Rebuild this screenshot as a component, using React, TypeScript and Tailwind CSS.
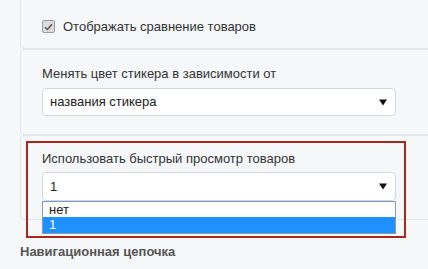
import React from "react";

function Arrow() {
  return (
    <svg width="8" height="7" viewBox="0 0 8 7" className="shrink-0">
      <path d="M0 0.5 H8 L4 6.5 Z" fill="#111" />
    </svg>
  );
}

function SelectBox({ value, tall }: { value: string; tall?: boolean }) {
  return (
    <div
      className={`flex items-center justify-between w-[354px] ${
        tall ? "h-[29px]" : "h-[28px]"
      } bg-white border border-[#cfd8df] rounded-[4px] pl-[7px] pr-[8px]`}
    >
      <span className="text-[13px] text-[#222]">{value}</span>
      <Arrow />
    </div>
  );
}

export default function App() {
  return (
    <div
      className="relative w-[428px] h-[269px] overflow-hidden bg-[#f5f7f9] text-[#333]"
      style={{ fontFamily: '"Liberation Sans", Arial, sans-serif' }}
    >
      <div className="pl-[20px] w-[460px]">
        {/* отображать сравнение */}
        <div className="-mt-[8px] h-[57px] border border-[#e1e7eb] rounded-[4px] flex items-start pl-[21px] pt-[27px]">
          <span className="w-[13px] h-[13px] rounded-[2px] border border-[#9a9a9a] bg-[#dcdcdc] flex items-center justify-center">
            <svg width="9" height="8" viewBox="0 0 9 8">
              <path d="M1 4.2 L3.4 6.5 L8 1.2" stroke="#555" strokeWidth="1.5" fill="none" />
            </svg>
          </span>
          <span className="ml-[8px] text-[13px] leading-[13px] -mt-[0px]">
            Отображать сравнение товаров
          </span>
        </div>

        {/* цвет стикера */}
        <div className="h-[86px] border border-[#e1e7eb] rounded-[4px] pl-[21px] pt-[16px]">
          <div className="text-[13px] leading-[15px]">Менять цвет стикера в зависимости от</div>
          <div className="mt-[7px]">
            <SelectBox value="названия стикера" />
          </div>
        </div>

        {/* быстрый просмотр */}
        <div className="h-[85px] border border-[#e1e7eb] rounded-[4px] pl-[21px] pt-[15px]">
          <div className="text-[13px] leading-[15px]">Использовать быстрый просмотр товаров</div>
          <div className="mt-[6px]">
            <SelectBox value="1" tall />
          </div>
        </div>

        <div className="mt-[22px] text-[13px] font-bold text-[#555]">Навигационная цепочка</div>
      </div>

      {/* открытый список */}
      <div className="absolute left-[42px] top-[201px] w-[354px] h-[33px] bg-white border border-[#7f9db9] text-[13px] leading-[15px]">
        <div className="h-[15px] pl-[6px] text-[#222]">нет</div>
        <div className="h-[16px] pl-[6px] bg-[#1e90ff] text-white">1</div>
      </div>

      {/* выделение */}
      <div className="absolute left-[26px] top-[141px] w-[380px] h-[97px] border-2 border-[#a8281a]" />
    </div>
  );
}
